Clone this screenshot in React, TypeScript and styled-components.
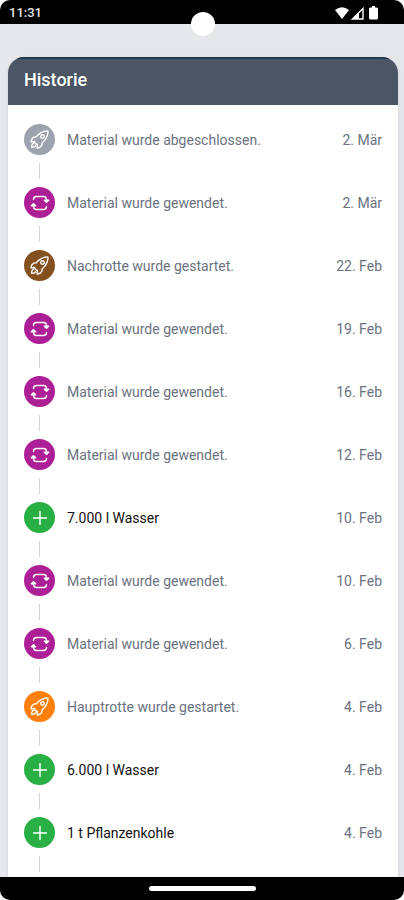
import React from "react";
import styled, { createGlobalStyle } from "styled-components";

const GlobalStyle = createGlobalStyle`
  * { box-sizing: border-box; }
  body { margin: 0; background: #ffffff; font-family: Roboto, "Liberation Sans", sans-serif; }
`;

const Screen = styled.div`
  position: relative;
  display: flex;
  flex-direction: column;
  height: 100vh;
  overflow: hidden;
  border-radius: 10px;
  background: #e5e7eb;
`;

const StatusBar = styled.header`
  display: flex;
  flex: none;
  align-items: center;
  justify-content: space-between;
  height: 24px;
  padding: 2px 23px 0 9px;
  background: #000000;
  color: #e6e6e6;
  font-size: 13px;
  font-weight: 500;
  line-height: 16px;
`;

const StatusIcons = styled.div`
  display: flex;
  align-items: center;
  gap: 2px;
`;

const Camera = styled.div`
  position: absolute;
  top: 12px;
  left: 50%;
  width: 24px;
  height: 24px;
  margin-left: -11px;
  border-radius: 50%;
  background: #ffffff;
`;

const Content = styled.main`
  display: flex;
  flex: 1;
  min-height: 0;
  flex-direction: column;
  padding: 33px 6px 0 8px;
`;

const Card = styled.section`
  flex: 1;
  min-height: 0;
  overflow: hidden;
  border-radius: 16px 16px 0 0;
  background: #ffffff;
  box-shadow: 0 1px 3px rgba(0, 0, 0, 0.12);
`;

const CardTitle = styled.h1`
  margin: 0;
  padding: 10px 16px 14px;
  border-top: 2px solid #1f3a50;
  background: #4b5563;
  color: #ffffff;
  font-size: 18px;
  font-weight: 500;
  line-height: 22px;
`;

const Timeline = styled.ol`
  margin: 0;
  padding: 19px 16px 0;
  list-style: none;
`;

const Entry = styled.li`
  display: grid;
  grid-template-columns: 31px 1fr auto;
  column-gap: 12px;
  align-items: center;
`;

const Badge = styled.span<{ $color: string }>`
  display: flex;
  align-items: center;
  justify-content: center;
  width: 31px;
  height: 31px;
  border-radius: 50%;
  background: ${(p) => p.$color};
  color: #ffffff;
`;

const Label = styled.span<{ $strong: boolean }>`
  color: ${(p) => (p.$strong ? "#111111" : "#6b7280")};
  font-size: 14px;
  line-height: 20px;
`;

const EntryDate = styled.time`
  color: #6b7280;
  font-size: 14px;
  line-height: 20px;
`;

const Connector = styled.span`
  justify-self: center;
  width: 1px;
  height: 16px;
  margin: 8px 0;
  background: #d1d5db;
`;

const NavBar = styled.footer`
  display: flex;
  flex: none;
  align-items: center;
  justify-content: center;
  height: 23px;
  background: #000000;
`;

const HomeHandle = styled.span`
  width: 107px;
  height: 5px;
  border-radius: 3px;
  background: #ffffff;
`;

type Kind = "rocket" | "turn" | "plus";

const strokeProps = {
  fill: "none",
  stroke: "currentColor",
  strokeLinecap: "round",
  strokeLinejoin: "round",
} as const;

function Icon({ kind }: { kind: Kind }) {
  if (kind === "rocket") {
    return (
      <svg width="21" height="21" viewBox="0 0 512 512" strokeWidth="34" {...strokeProps} aria-hidden="true">
        <path d="M461.81 53.81a4.4 4.4 0 0 0-3.3-3.39c-54.38-13.3-180 34.09-248.13 102.17a294.9 294.9 0 0 0-33.09 39.08c-21-1.9-42-.3-59.88 7.5-50.49 22.2-65.18 80.18-69.28 105.07a9 9 0 0 0 9.8 10.4l81.07-8.9a180 180 0 0 0 1.1 18.3 18.15 18.15 0 0 0 5.3 11.09l31.39 31.39a18.15 18.15 0 0 0 11.1 5.3 180 180 0 0 0 18.19 1.1l-8.89 81a9 9 0 0 0 10.39 9.79c24.9-4 83-18.69 105.07-69.17 7.8-17.9 9.4-38.79 7.6-59.69a294 294 0 0 0 39.19-33.09c68.38-68 115.47-190.86 102.37-247.95M298.66 213.67a42.7 42.7 0 1 1 60.38 0 42.65 42.65 0 0 1-60.38 0" />
        <path d="M109.64 352a45.06 45.06 0 0 0-26.35 12.84C65.67 382.52 64 448 64 448s65.52-1.67 83.15-19.31A44.73 44.73 0 0 0 160 402.32" />
      </svg>
    );
  }
  if (kind === "turn") {
    return (
      <svg width="20" height="20" viewBox="0 0 20 20" strokeWidth="1.4" {...strokeProps} aria-hidden="true">
        <path d="M3.500 6.500Q3.500 3.500 6.500 3.500h7Q16.500 3.500 16.500 6.500V9M16.500 13.500Q16.500 16.500 13.500 16.500h-7Q3.500 16.500 3.500 13.500V11" />
        <path d="M14.300 7.200 16.500 9.200l2.200-2zM1.300 12.800 3.500 10.800l2.200 2z" fill="currentColor" />
      </svg>
    );
  }
  return (
    <svg width="20" height="20" viewBox="0 0 20 20" strokeWidth="1.4" {...strokeProps} aria-hidden="true">
      <path d="M10 3.500v13M3.500 10h13" />
    </svg>
  );
}

const turned = "Material wurde gewendet.";
const purple = "#ac1f96";
const green = "#28b045";

const entries: { kind: Kind; color: string; text: string; date: string; strong?: boolean }[] = [
  { kind: "rocket", color: "#9ca3af", text: "Material wurde abgeschlossen.", date: "2. Mär" },
  { kind: "turn", color: purple, text: turned, date: "2. Mär" },
  { kind: "rocket", color: "#85501f", text: "Nachrotte wurde gestartet.", date: "22. Feb" },
  { kind: "turn", color: purple, text: turned, date: "19. Feb" },
  { kind: "turn", color: purple, text: turned, date: "16. Feb" },
  { kind: "turn", color: purple, text: turned, date: "12. Feb" },
  { kind: "plus", color: green, text: "7.000 l Wasser", date: "10. Feb", strong: true },
  { kind: "turn", color: purple, text: turned, date: "10. Feb" },
  { kind: "turn", color: purple, text: turned, date: "6. Feb" },
  { kind: "rocket", color: "#ff7f0a", text: "Hauptrotte wurde gestartet.", date: "4. Feb" },
  { kind: "plus", color: green, text: "6.000 l Wasser", date: "4. Feb", strong: true },
  { kind: "plus", color: green, text: "1 t Pflanzenkohle", date: "4. Feb", strong: true },
];

export default function App() {
  return (
    <>
      <GlobalStyle />
      <Screen>
        <StatusBar>
          <span>11:31</span>
          <StatusIcons>
            <svg width="14" height="12" viewBox="0 0 14 12" fill="#ffffff" aria-hidden="true">
              <path d="M0 3Q7-2.500 14 3L7 12z" />
            </svg>
            <svg width="13" height="13" viewBox="0 0 13 13" aria-hidden="true">
              <path d="M12 1.500V12H1.500z" fill="none" stroke="#ffffff" strokeWidth="1.400" />
              <path d="M8 5v7H1z" fill="#ffffff" />
            </svg>
            <svg width="15" height="14" viewBox="0 0 15 14" fill="#ffffff" aria-hidden="true">
              <path d="M6 0h3v1.500h1.500q1.500 0 1.500 1.500v9q0 1.500-1.500 1.500h-6Q3 13.500 3 12V3q0-1.500 1.500-1.500H6z" />
            </svg>
          </StatusIcons>
        </StatusBar>
        <Content>
          <Card>
            <CardTitle>Historie</CardTitle>
            <Timeline>
              {entries.map((entry, index) => (
                <Entry key={index}>
                  <Badge $color={entry.color}>
                    <Icon kind={entry.kind} />
                  </Badge>
                  <Label $strong={Boolean(entry.strong)}>{entry.text}</Label>
                  <EntryDate>{entry.date}</EntryDate>
                  <Connector />
                </Entry>
              ))}
            </Timeline>
          </Card>
        </Content>
        <NavBar>
          <HomeHandle />
        </NavBar>
        <Camera />
      </Screen>
    </>
  );
}
